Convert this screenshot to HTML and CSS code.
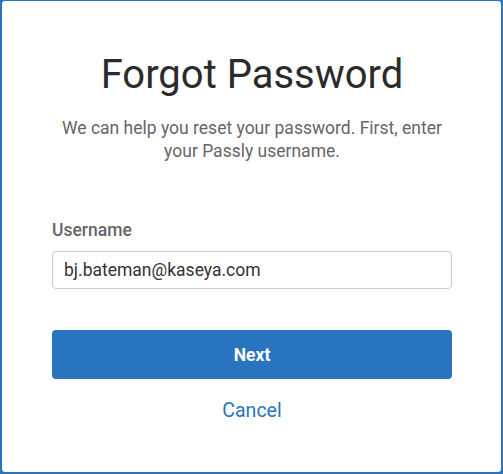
FILE: index.html
```html
<!DOCTYPE html>
<html>
<head>
<meta charset="utf-8">
<link rel="stylesheet" href="styles.css">
</head>
<body>
<div class="card">
  <h1 class="title">Forgot Password</h1>
  <p class="lead">We can help you reset your password. First, enter your Passly username.</p>
  <form class="form">
    <label class="label" for="u">Username</label>
    <input class="input" id="u" type="text" value="bj.bateman@kaseya.com">
    <button class="btn" type="button">Next</button>
    <a class="cancel" href="#">Cancel</a>
  </form>
</div>
</body>
</html>
```
FILE: styles.css
```css
* { box-sizing: border-box; }
html, body { margin: 0; height: 100%; }
body {
  background: #2a73bd;
  padding: 1px 2px 2px 2px;
  font-family: Roboto, "Liberation Sans", sans-serif;
}
.card {
  background: #fff;
  height: 471px;
  border-radius: 3px;
  padding: 0 49px 0 50px;
  display: flex;
  flex-direction: column;
}
.title {
  margin: 50px 0 0 0;
  font-size: 40px;
  font-weight: 400;
  line-height: 48px;
  color: #2b2b2b;
  text-align: center;
}
.lead {
  margin: 18px 0 0 0;
  font-size: 17.5px;
  line-height: 23px;
  color: #666;
  text-align: center;
}
.form {
  display: flex;
  flex-direction: column;
  margin-top: 57px;
}
.label {
  font-size: 17.5px;
  font-weight: 500;
  color: #666;
  line-height: 20px;
}
.input {
  margin-top: 11px;
  height: 38px;
  border: 1px solid #ccc;
  border-radius: 4px;
  padding: 0 11px;
  font-family: inherit;
  font-size: 17.5px;
  color: #333;
}
.btn {
  margin-top: 41px;
  height: 49px;
  border: 0;
  border-radius: 4px;
  background: #2874bf;
  color: #fff;
  font-family: inherit;
  font-size: 17.5px;
  font-weight: 700;
  padding-top: 2px;
}
.cancel {
  margin-top: 20px;
  align-self: center;
  font-size: 19.5px;
  color: #2a73bd;
  text-decoration: none;
  line-height: 24px;
}
```
